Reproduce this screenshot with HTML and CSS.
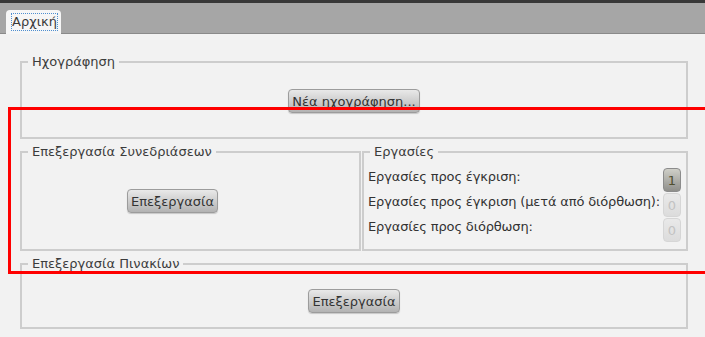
FILE: index.html
```html
<!DOCTYPE html>
<html lang="el">
<head>
<meta charset="utf-8">
<title>Αρχική</title>
<link rel="stylesheet" href="styles.css">
</head>
<body>
<div class="topbar"></div>
<div class="tabbar">
  <div class="tab"><span class="tab-label">Αρχική</span></div>
</div>
<main class="content">
  <fieldset class="group">
    <legend>Ηχογράφηση</legend>
    <div class="record-body"><button class="btn">Νέα ηχογράφηση...</button></div>
  </fieldset>
  <div class="row">
    <fieldset class="group">
      <legend>Επεξεργασία Συνεδριάσεων</legend>
      <div class="sessions-body"><button class="btn">Επεξεργασία</button></div>
    </fieldset>
    <fieldset class="group">
      <legend>Εργασίες</legend>
      <div class="tasks">
        <div class="task"><span class="task-label">Εργασίες προς έγκριση:</span><button class="count active">1</button></div>
        <div class="task"><span class="task-label">Εργασίες προς έγκριση (μετά από διόρθωση):</span><button class="count" disabled>0</button></div>
        <div class="task"><span class="task-label">Εργασίες προς διόρθωση:</span><button class="count" disabled>0</button></div>
      </div>
    </fieldset>
  </div>
  <fieldset class="group">
    <legend>Επεξεργασία Πινακίων</legend>
    <div class="tables-body"><button class="btn">Επεξεργασία</button></div>
  </fieldset>
</main>
<div class="highlight"></div>
</body>
</html>
```
FILE: styles.css
```css
html, body {
  margin: 0;
  padding: 0;
}
body {
  background: #f2f2f2;
  font-family: "DejaVu Sans", "Liberation Sans", sans-serif;
  font-size: 13px;
  color: #333;
  overflow: hidden;
  height: 337px;
  position: relative;
}
.topbar {
  height: 3px;
  background: #383838;
}
.tabbar {
  height: 31px;
  background: #a6a6a6;
  box-shadow: inset 0 -1px 0 #8a8a8a;
  display: flex;
  align-items: flex-end;
  padding-left: 6px;
}
.tab {
  height: 24px;
  box-sizing: border-box;
  width: 55px;
  padding: 3px 0 0 5px;
  background: #f6f6f6;
  border-radius: 4px 4px 0 0;
}
.tab-label {
  display: inline-block;
  line-height: 14px;
  padding: 1px 0;
  border: 1px dotted #4f8fd0;
  color: #3a3a3a;
  font-size: 13px;
}
.content {
  padding: 21px 17px 0 20px;
  display: flex;
  flex-direction: column;
  gap: 6px;
}
.group {
  margin: 0;
  padding: 0;
  border: 2px solid #cdcdcd;
  min-width: 0;
}
.group legend {
  margin-left: 6px;
  padding: 0 4px;
  line-height: 14px;
  color: #3c3c3c;
}
.row {
  display: grid;
  grid-template-columns: 341px 1fr;
  gap: 1px;
}
.btn {
  font-family: "DejaVu Sans", "Liberation Sans", sans-serif;
  font-size: 13px;
  color: #333;
  height: 24px;
  padding: 0 3px;
  border: 1px solid #9c9c9c;
  border-radius: 4px;
  background: linear-gradient(#e9e9e9, #b3b3b3);
  box-shadow: 0 1px 1px rgba(0, 0, 0, 0.18);
}
.record-body {
  padding: 20px 0 24px;
  text-align: center;
}
.sessions-body {
  padding: 30px 0 0 105px;
}
.tables-body {
  padding: 18px 0 14px;
  text-align: center;
}
.tasks {
  padding: 9px 5px 6px 4px;
  display: flex;
  flex-direction: column;
}
.task {
  display: flex;
  justify-content: space-between;
  align-items: flex-start;
  height: 25px;
}
.task-label {
  line-height: 18px;
  color: #333;
  white-space: nowrap;
  letter-spacing: -0.15px;
  min-width: 0;
}
.count {
  flex: none;
  width: 18px;
  height: 24px;
  padding: 0;
  font-family: "DejaVu Sans", "Liberation Sans", sans-serif;
  font-size: 13px;
  border-radius: 4px;
  border: 1px solid #d6d6d6;
  background: linear-gradient(#e9e9e9, #dcdcdc);
  color: #c2c2c2;
}
.count.active {
  border-color: #8c8c8c;
  background: linear-gradient(#cfcfc8, #8f8f8b);
  color: #4f4f30;
}
.highlight {
  position: absolute;
  left: 8px;
  top: 107px;
  width: 700px;
  height: 161px;
  border: 3px solid #ff0000;
  pointer-events: none;
}
```
